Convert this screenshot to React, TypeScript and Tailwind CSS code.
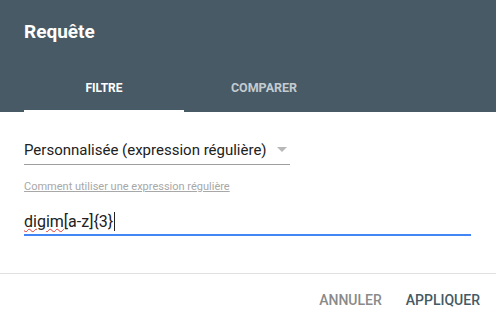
const App = () => {
  return (
    <div className="w-[496px] h-[326px] bg-white font-['Roboto',sans-serif] flex flex-col overflow-hidden">
      {/* En-tête */}
      <div className="bg-[#485a65] px-6 pt-[20px]">
        <h1 className="text-[19px] leading-6 font-bold text-white">Requête</h1>
        <div className="flex mt-[20px]">
          <button className="w-40 h-12 flex items-center justify-center text-[12px] font-bold text-white border-b-2 border-white pt-[2px]">
            FILTRE
          </button>
          <button className="w-40 h-12 flex items-center justify-center text-[12.5px] font-bold text-[#c3cbd0] border-b-2 border-transparent pt-[2px]">
            COMPARER
          </button>
        </div>
      </div>

      {/* Contenu */}
      <div className="px-6 pt-[23px] flex-1">
        <div className="w-[266px] h-[30px] flex items-center justify-between border-b border-[#9e9e9e]">
          <span className="text-[15px] text-[#212121] leading-5">Personnalisée (expression régulière)</span>
          <svg width="10" height="5" viewBox="0 0 10 5" className="mr-[3px]">
            <path d="M0 0 L10 0 L5 5 Z" fill="#b8b8b8" />
          </svg>
        </div>
        <a href="#" className="block mt-[14px] text-[11px] leading-4 text-[#a8a8a8] underline w-fit">
          Comment utiliser une expression régulière
        </a>
        <div className="mt-[14px] w-[447px] border-b-2 border-[#4285f4] h-[27px] flex items-center">
          <span className="text-[16px] text-[#212121] leading-5">
            <span className="underline decoration-wavy decoration-[#e53935] decoration-1 underline-offset-[1px]">digim</span>
            [a-z]{"{3}"}
          </span>
          <span className="inline-block w-px h-[19px] bg-[#212121] ml-px" />
        </div>
      </div>

      {/* Actions */}
      <div className="border-t border-[#e0e0e0] h-[53px] flex items-center justify-end gap-6 px-4">
        <button className="text-[14px] font-medium text-[#8a8a8a]">ANNULER</button>
        <button className="text-[14px] font-medium text-[#455a64]">APPLIQUER</button>
      </div>
    </div>
  );
};

export default App;
